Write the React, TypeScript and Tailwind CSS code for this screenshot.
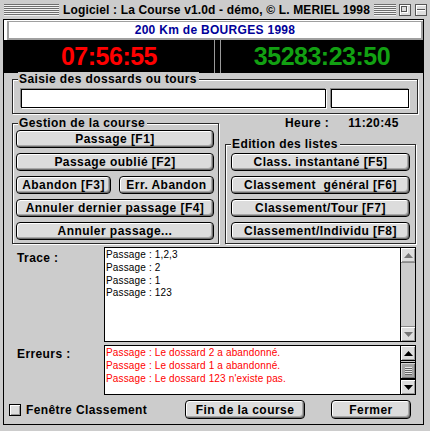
import React from 'react';

const stripes =
  'bg-[repeating-linear-gradient(to_bottom,#6e6e6e_0px,#6e6e6e_1px,#f2f2f2_1px,#f2f2f2_2px)]';

function Btn({ label, className = '' }: { label: string; className?: string }) {
  return (
    <div
      className={`flex h-[18px] items-center justify-center whitespace-nowrap rounded-[4px] border border-black bg-[#dcdcdc] text-[12px] font-bold leading-none tracking-[0.45px] text-black shadow-[inset_1px_1px_0_#fff,inset_-1px_-1px_0_#6f6f6f,inset_-2px_-2px_0_#a8a8a8] ${className}`}
    >
      {label}
    </div>
  );
}

function Group({ label, className = '', children }: { label: string; className?: string; children?: React.ReactNode }) {
  return (
    <div className={`relative border border-[#2a2a2a] shadow-[inset_1px_1px_0_#fff,1px_1px_0_#fff] ${className}`}>
      <span className="absolute left-[5px] top-[-8px] whitespace-nowrap bg-[#cccccc] pl-[1px] pr-[2px] text-[12px] font-bold leading-[14px] tracking-[0.4px]">
        {label}
      </span>
      {children}
    </div>
  );
}

function Field({ className = '' }: { className?: string }) {
  return <div className={`h-[19px] border border-black bg-white shadow-[-1px_-1px_0_#8a8a8a,1px_1px_0_#fff] ${className}`} />;
}

function Arrow({ up, active }: { up?: boolean; active?: boolean }) {
  const edge = active ? 'border-black' : 'border-[#8a8a8a]';
  return (
    <div
      className={`flex h-[15px] items-center justify-center bg-[#dddddd] shadow-[inset_1px_1px_0_#fff,inset_-1px_-1px_0_#9a9a9a] ${up ? 'border-b' : 'border-t'} ${edge}`}
    >
      <svg width="9" height="5" viewBox="0 0 9 5">
        <polygon points={up ? '0,5 9,5 4.5,0' : '0,0 9,0 4.5,5'} fill={active ? '#000' : '#777'} />
      </svg>
    </div>
  );
}

function ScrollInactive() {
  return (
    <div className="flex w-[15px] flex-col border-l border-black bg-[#cccccc]">
      <Arrow up />
      <div className="flex-1" />
      <Arrow />
    </div>
  );
}

function ScrollActive() {
  return (
    <div className="flex w-[15px] flex-col border-l border-black bg-[#cccccc]">
      <Arrow up active />
      <div className="flex-1 pt-[1px]">
        <div className="flex h-[17px] flex-col items-center justify-center gap-[1px] border-y border-black bg-[#a6a6a6] shadow-[inset_1px_1px_0_#d6d6d6,inset_-1px_-1px_0_#777]">
          {[0, 1, 2, 3].map((i) => (
            <div key={i} className="h-[1px] w-[7px] bg-[#e8e8e8] shadow-[0_1px_0_#666]" />
          ))}
        </div>
      </div>
      <Arrow active />
    </div>
  );
}

export default function App() {
  const trace = ['Passage : 1,2,3', 'Passage : 2', 'Passage : 1', 'Passage : 123'];
  const errors = [
    'Passage : Le dossard 2 a abandonné.',
    'Passage : Le dossard 1 a abandonné.',
    "Passage : Le dossard 123 n'existe pas.",
  ];

  return (
    <div className="h-[431px] w-[430px] overflow-hidden bg-[#cccccc] font-['Liberation_Sans',Arial,sans-serif] text-black">
      {/* title bar */}
      <div className="flex h-[19px] items-center pl-[4px]">
        <div className={`h-[12px] w-[55px] ${stripes}`} />
        <div className="mx-[4px] whitespace-nowrap text-[12px] font-bold leading-none tracking-[0.15px]">
          Logiciel : La Course v1.0d - démo, © L. MERIEL 1998
        </div>
        <div className={`h-[12px] flex-1 ${stripes}`} />
        <div className="ml-[3px] h-[12px] w-[12px] border border-[#555] bg-[#dddddd] p-[1px] shadow-[inset_1px_1px_0_#fff]">
          <div className="h-[6px] w-[6px] border border-[#555] shadow-[1px_1px_0_#fff]" />
        </div>
        <div className="ml-[4px] mr-[3px] flex h-[12px] w-[12px] flex-col justify-center border border-[#555] bg-[#dddddd] shadow-[inset_1px_1px_0_#fff]">
          <div className="mx-[1px] h-[1px] bg-[#555] shadow-[0_1px_0_#fff]" />
        </div>
      </div>

      {/* window content */}
      <div className="ml-[3px] flex h-[406px] w-[421px] flex-col border border-black">
        <div className="flex h-[20px] bg-white pl-[3px] pt-[1px]">
          <div className="flex flex-1 items-center justify-center border-2 border-t border-[#a0a0a0] text-[12px] font-bold leading-none tracking-[0.3px] text-[#000099]">
            200 Km de BOURGES 1998
          </div>
        </div>

        <div className="flex h-[33px] bg-black">
          <div className="flex w-[211px] items-center justify-center border-r border-[#9a9a9a] text-[25px] font-bold leading-none tracking-[-0.5px] text-[#ff0000]">
            07:56:55
          </div>
          <div className="ml-[5px] flex flex-1 items-center justify-center border-l border-[#9a9a9a] text-[25px] font-bold leading-none tracking-[-0.5px] text-[#12a012]">
            35283:23:50
          </div>
        </div>

        <div className="flex flex-1 flex-col bg-[#cccccc]">
          <Group label="Saisie des dossards ou tours" className="ml-[8px] mt-[6px] h-[35px] w-[406px]">
            <div className="flex gap-[5px] pl-[8px] pt-[9px]">
              <Field className="w-[305px]" />
              <Field className="w-[78px]" />
            </div>
          </Group>

          <div className="mt-[2px] flex">
            <Group label="Gestion de la course" className="ml-[8px] mt-[7px] h-[121px] w-[207px]">
              <div className="flex w-[201px] flex-col gap-[5px] pl-[3px] pt-[6px]">
                <Btn label="Passage [F1]" />
                <Btn label="Passage oublié [F2]" />
                <div className="flex justify-between">
                  <Btn label="Abandon [F3]" className="w-[95px]" />
                  <Btn label="Err. Abandon" className="w-[95px]" />
                </div>
                <Btn label="Annuler dernier passage [F4]" />
                <Btn label="Annuler passage..." />
              </div>
            </Group>

            <div className="ml-[6px] flex w-[191px] flex-col">
              <div className="flex h-[14px] items-center pl-[60px] text-[12px] font-bold leading-none tracking-[0.4px]">
                <span>Heure :</span>
                <span className="ml-[19px]">11:20:45</span>
              </div>
              <Group label="Edition des listes" className="mt-[14px] h-[100px] w-[191px]">
                <div className="flex w-[184px] flex-col gap-[5px] pl-[5px] pt-[8px]">
                  <Btn label="Class. instantané [F5]" />
                  <Btn label="Classement  général [F6]" className="whitespace-pre" />
                  <Btn label="Classement/Tour [F7]" />
                  <Btn label="Classement/Individu [F8]" />
                </div>
              </Group>
            </div>
          </div>

          <div className="mt-[3px] flex">
            <div className="w-[100px] pl-[13px] pt-[4px] text-[12px] font-bold leading-[14px] tracking-[0.4px]">Trace :</div>
            <div className="flex h-[95px] w-[312px] border border-black bg-white">
              <div className="flex-1 pl-[1px] pt-[1px] text-[10px] leading-[12.8px] tracking-[0.15px]">
                {trace.map((t) => (
                  <div key={t}>{t}</div>
                ))}
              </div>
              <ScrollInactive />
            </div>
          </div>

          <div className="mt-[3px] flex">
            <div className="w-[100px] pl-[13px] pt-[2px] text-[12px] font-bold leading-[14px] tracking-[0.4px]">Erreurs :</div>
            <div className="flex h-[50px] w-[312px] border border-black bg-white">
              <div className="flex-1 pl-[1px] text-[10px] leading-[13px] tracking-[0.15px] text-[#ff0000]">
                {errors.map((t) => (
                  <div key={t}>{t}</div>
                ))}
              </div>
              <ScrollActive />
            </div>
          </div>

          <div className="mt-[5px] flex h-[19px] items-center pl-[5px]">
            <div className="h-[12px] w-[12px] border border-black bg-[#dddddd] shadow-[inset_1px_1px_0_#fff,inset_-1px_-1px_0_#999]" />
            <div className="w-[164px] pl-[5px] text-[12px] font-bold leading-none tracking-[0.4px]">Fenêtre Classement</div>
            <Btn label="Fin de la course" className="h-[19px] w-[120px]" />
            <Btn label="Fermer" className="ml-[26px] h-[19px] w-[80px]" />
          </div>
        </div>
      </div>
    </div>
  );
}
